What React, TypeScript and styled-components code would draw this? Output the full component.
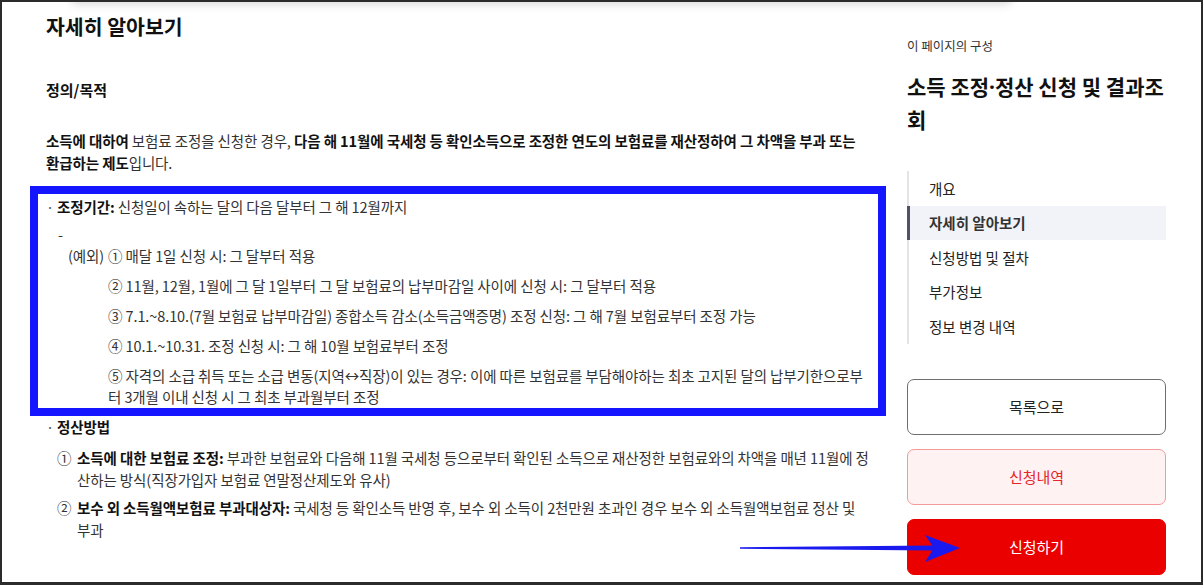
import React from "react";
import styled, { createGlobalStyle } from "styled-components";

const Global = createGlobalStyle`
  html, body { margin: 0; padding: 0; background: #fff; }
  body {
    font-family: "Noto Sans CJK KR", "Noto Sans", sans-serif;
    color: #222;
    -webkit-font-smoothing: antialiased;
  }
  * { box-sizing: border-box; }
`;

const Frame = styled.div`
  position: relative;
  width: 1203px;
  height: 585px;
  border: 2px solid #2b2b2b;
  border-bottom-width: 3px;
  overflow: hidden;
  display: flex;
  align-items: flex-start;
  background: #fff;
`;

const TopShadow = styled.div`
  position: absolute;
  top: -12px;
  left: 70px;
  right: 190px;
  height: 12px;
  box-shadow: 0 2px 10px rgba(0, 0, 0, 0.16);
`;

const Main = styled.main`
  flex: 0 0 824px;
  margin-left: 44px;
  padding-top: 9px;
`;

const Title = styled.h2`
  margin: 0;
  font-size: 20.5px;
  line-height: 30px;
  font-weight: 700;
  color: #111;
`;

const Heading = styled.h3<{ $gap?: number }>`
  margin: ${(p) => p.$gap ?? 38}px 0 0;
  font-size: 15px;
  line-height: 22px;
  font-weight: 700;
  color: #111;
`;

const Para = styled.p`
  margin: 29px 0 0;
  font-size: 14.5px;
  line-height: 22px;
  color: #333;
  letter-spacing: -0.1px;
  strong { color: #111; font-weight: 700; }
`;

const Highlight = styled.div`
  margin: 12px -16px 0;
  border: 8px solid #1515ff;
  padding: 2px 8px 1px;
`;

const BulletRow = styled.div`
  display: flex;
  font-size: 14.5px;
  line-height: 21px;
  color: #333;
  letter-spacing: -0.1px;
  strong { color: #111; font-weight: 700; }
`;

const Dot = styled.span`
  flex: 0 0 11px;
  color: #555;
`;

const Dash = styled.div`
  margin-top: 7px;
  padding-left: 12px;
  font-size: 14.5px;
  line-height: 21px;
  color: #333;
`;

const ExGrid = styled.div`
  display: grid;
  grid-template-columns: 40px 1fr;
  padding-left: 22px;
  font-size: 14.5px;
  line-height: 21px;
  color: #333;
  letter-spacing: -0.1px;
`;

const ExList = styled.div`
  display: flex;
  flex-direction: column;
  gap: 9px;
`;

const NumList = styled.div`
  padding-left: 11px;
  margin-top: 10px;
  display: flex;
  flex-direction: column;
  gap: 6px;
`;

const NumItem = styled.div`
  display: grid;
  grid-template-columns: 20px 1fr;
  font-size: 14.5px;
  line-height: 22px;
  color: #333;
  letter-spacing: -0.1px;
  strong { color: #111; font-weight: 700; }
`;

const Side = styled.aside`
  flex: 0 0 259px;
  margin-left: 37px;
  padding-top: 35px;
`;

const SideLabel = styled.div`
  font-size: 12.5px;
  line-height: 18px;
  color: #333;
`;

const SideTitle = styled.div`
  margin-top: 15px;
  font-size: 21px;
  line-height: 32px;
  font-weight: 700;
  color: #111;
`;

const MidDot = styled.span`
  font-family: "Noto Sans", "DejaVu Sans", sans-serif;
`;

const Nav = styled.ul`
  list-style: none;
  margin: 36px 0 0;
  padding: 0;
  border-left: 2px solid #e4e4e8;
`;

const NavItem = styled.li<{ $active?: boolean }>`
  margin-left: -2px;
  height: 34.5px;
  display: flex;
  align-items: center;
  padding-left: 19px;
  border-left: 3px solid ${(p) => (p.$active ? "#525266" : "transparent")};
  background: ${(p) => (p.$active ? "#f2f3f8" : "transparent")};
  font-size: 14.5px;
  font-weight: ${(p) => (p.$active ? 700 : 400)};
  color: ${(p) => (p.$active ? "#333" : "#222")};
`;

const Buttons = styled.div`
  margin-top: 35px;
  display: flex;
  flex-direction: column;
  gap: 14px;
`;

const Btn = styled.button<{ $variant: "outline" | "soft" | "primary" }>`
  width: 100%;
  height: 56px;
  border-radius: 7px;
  font-family: inherit;
  font-size: 15px;
  cursor: pointer;
  border: 1px solid
    ${(p) =>
      p.$variant === "outline" ? "#6f6f6f" : p.$variant === "soft" ? "#f39a9a" : "#eb0000"};
  background: ${(p) =>
    p.$variant === "outline" ? "#fff" : p.$variant === "soft" ? "#fff2f2" : "#eb0000"};
  color: ${(p) =>
    p.$variant === "outline" ? "#222" : p.$variant === "soft" ? "#e5242b" : "#fff"};
`;

const Arrow = styled.svg`
  position: absolute;
  left: 736px;
  top: 531px;
  width: 225px;
  height: 32px;
  overflow: visible;
`;

export default function App() {
  return (
    <>
      <Global />
      <Frame>
        <TopShadow />
        <Main>
          <Title>자세히 알아보기</Title>
          <Heading>정의/목적</Heading>
          <Para>
            <strong>소득에 대하여</strong> 보험료 조정을 신청한 경우,{" "}
            <strong>
              다음 해 11월에 국세청 등 확인소득으로 조정한 연도의 보험료를 재산정하여 그 차액을 부과 또는
              환급하는 제도
            </strong>
            입니다.
          </Para>
          <Highlight>
            <BulletRow>
              <Dot>·</Dot>
              <span>
                <strong>조정기간:</strong> 신청일이 속하는 달의 다음 달부터 그 해 12월까지
              </span>
            </BulletRow>
            <Dash>-</Dash>
            <ExGrid>
              <span>(예외)</span>
              <ExList>
                <div>① 매달 1일 신청 시: 그 달부터 적용</div>
                <div>② 11월, 12월, 1월에 그 달 1일부터 그 달 보험료의 납부마감일 사이에 신청 시: 그 달부터 적용</div>
                <div>③ 7.1.~8.10.(7월 보험료 납부마감일) 종합소득 감소(소득금액증명) 조정 신청: 그 해 7월 보험료부터 조정 가능</div>
                <div>④ 10.1.~10.31. 조정 신청 시: 그 해 10월 보험료부터 조정</div>
                <div>
                  ⑤ 자격의 소급 취득 또는 소급 변동(지역↔직장)이 있는 경우: 이에 따른 보험료를 부담해야하는 최초 고지된 달의 납부기한으로부터 3개월 이내 신청 시 그 최초 부과월부터 조정
                </div>
              </ExList>
            </ExGrid>
          </Highlight>
          <BulletRow>
            <Dot>·</Dot>
            <strong>정산방법</strong>
          </BulletRow>
          <NumList>
            <NumItem>
              <span>①</span>
              <span>
                <strong>소득에 대한 보험료 조정:</strong> 부과한 보험료와 다음해 11월 국세청 등으로부터 확인된 소득으로 재산정한 보험료와의 차액을 매년 11월에 정산하는 방식(직장가입자 보험료 연말정산제도와 유사)
              </span>
            </NumItem>
            <NumItem>
              <span>②</span>
              <span>
                <strong>보수 외 소득월액보험료 부과대상자:</strong> 국세청 등 확인소득 반영 후, 보수 외 소득이 2천만원 초과인 경우 보수 외 소득월액보험료 정산 및 부과
              </span>
            </NumItem>
          </NumList>
          <Heading>신청방법</Heading>
        </Main>
        <Side>
          <SideLabel>이 페이지의 구성</SideLabel>
          <SideTitle>
            소득 조정<MidDot>·</MidDot>정산 신청 및 결과조회
          </SideTitle>
          <Nav>
            <NavItem>개요</NavItem>
            <NavItem $active>자세히 알아보기</NavItem>
            <NavItem>신청방법 및 절차</NavItem>
            <NavItem>부가정보</NavItem>
            <NavItem>정보 변경 내역</NavItem>
          </Nav>
          <Buttons>
            <Btn $variant="outline">목록으로</Btn>
            <Btn $variant="soft">신청내역</Btn>
            <Btn $variant="primary">신청하기</Btn>
          </Buttons>
        </Side>
        <Arrow viewBox="0 0 225 32">
          <polygon points="2,14.2 196,12.5 196,17.5 2,15.8" fill="#1a1aee" />
          <polygon points="187,2 222,15 187,29 196,15" fill="#1a1aee" />
        </Arrow>
      </Frame>
    </>
  );
}
